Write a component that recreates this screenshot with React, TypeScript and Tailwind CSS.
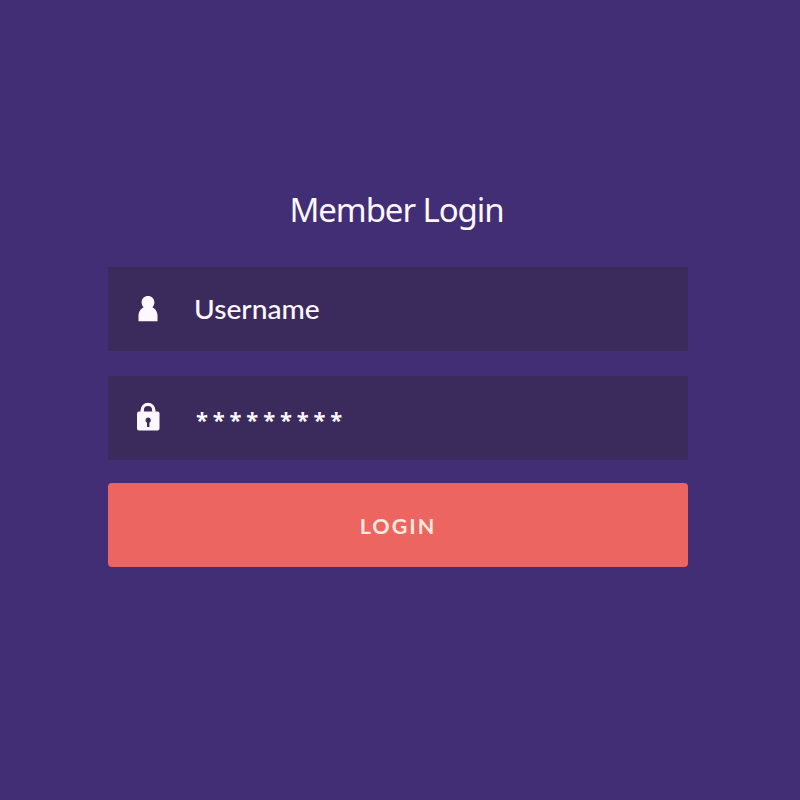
import React from "react";

function UserIcon() {
  return (
    <svg className="ml-[30px] h-[26px] w-5 shrink-0" viewBox="0 0 20 26" fill="#fdf7ff">
      <path d="M10 0C13.600 0 16.400 2.700 16.400 6.200C16.400 8.300 15.700 9.900 14.400 11.300C17.700 13 19.500 16 19.500 19.500V25.300H.5V19.500C.5 16 2.300 13 5.600 11.300C4.300 9.900 3.600 8.300 3.600 6.200C3.600 2.700 6.400 0 10 0Z" />
    </svg>
  );
}

function LockIcon() {
  return (
    <svg className="mb-[3px] ml-7 h-[29px] w-6 shrink-0" viewBox="0 0 24 29">
      <path d="M6.200 11V8.200a5.800 5.800 0 0 1 11.600 0V11" fill="none" stroke="#fdf7ff" strokeWidth="3.400" />
      <rect x="1" y="9.500" width="22.500" height="19" rx="2" fill="#fdf7ff" />
      <path d="M12.200 15.600a2.700 2.700 0 0 1 1.200 5.100V25h-2.400v-4.300A2.700 2.700 0 0 1 12.200 15.600Z" fill="#3b2a5c" />
    </svg>
  );
}

export default function App() {
  return (
    <main className="flex h-[800px] w-[800px] flex-col bg-[#412e75] pr-[112px] pl-[108px] text-[#fdf7ff]">
      <h1 className="mt-[187px] h-[46px] w-[577px] text-center font-['Noto_Sans',sans-serif] text-[33px] leading-[46px] tracking-[-1.080px] whitespace-nowrap">
        Member Login
      </h1>
      <div className="mt-[34px] flex h-[84px] items-center bg-[#3b2a5c]">
        <UserIcon />
        <span className="ml-9 origin-left scale-x-[1.085] font-['Lato',sans-serif] text-[26px] leading-8 font-medium">
          Username
        </span>
      </div>
      <div className="mt-[25px] flex h-[84px] items-center bg-[#3b2a5c]">
        <LockIcon />
        <span className="mt-[2px] ml-9 font-['Open_Sans',sans-serif] text-[22px] leading-8 font-bold tracking-[4.800px]">
          *********
        </span>
      </div>
      <button className="mt-[23px] h-[84px] rounded bg-[#ec6561] pt-[2px] font-['Lato',sans-serif] text-[21.500px] font-bold tracking-[2px] text-[#ffe8df]">
        LOGIN
      </button>
    </main>
  );
}
